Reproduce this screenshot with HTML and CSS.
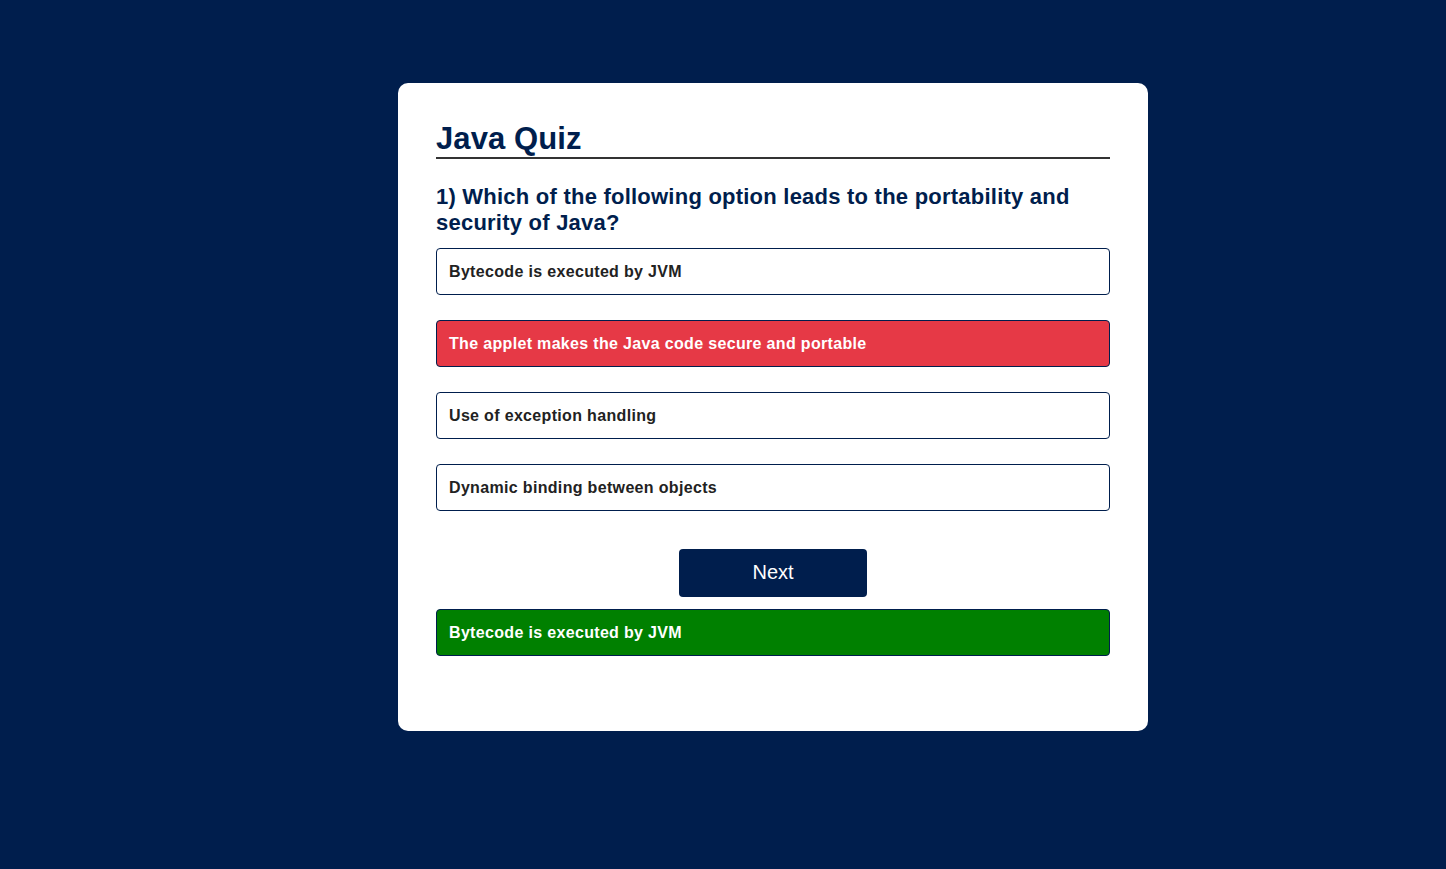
FILE: index.html
```html
<!DOCTYPE html>
<html>
<head>
<meta charset="utf-8">
<link rel="stylesheet" href="styles.css">
</head>
<body>
<main class="page">
  <section class="card">
    <h1 class="title">Java Quiz</h1>
    <h2 class="question">1) Which of the following option leads to the portability and security of Java?</h2>
    <div class="options">
      <button class="option">Bytecode is executed by JVM</button>
      <button class="option option-wrong">The applet makes the Java code secure and portable</button>
      <button class="option">Use of exception handling</button>
      <button class="option">Dynamic binding between objects</button>
    </div>
    <div class="actions">
      <button class="next">Next</button>
    </div>
    <div class="answer">Bytecode is executed by JVM</div>
  </section>
</main>
</body>
</html>
```
FILE: styles.css
```css
html, body {
  margin: 0;
  padding: 0;
  background: #001e4d;
  font-family: "Liberation Sans", Arial, sans-serif;
}
.page {
  display: flex;
  justify-content: center;
  padding: 83px 0 0 100px;
}
.card {
  width: 750px;
  box-sizing: border-box;
  background: #fff;
  border-radius: 10px;
  padding: 38px 38px 75px;
}
.title {
  margin: 0;
  font-size: 31px;
  font-weight: bold;
  color: #001e4d;
  line-height: 36px;
  letter-spacing: 0.1px;
  border-bottom: 2px solid #333;
  padding-bottom: 0;
}
.question {
  margin: 25px 0 12px;
  font-size: 22px;
  line-height: 26px;
  font-weight: bold;
  color: #001e4d;
  letter-spacing: 0.23px;
}
.options {
  display: flex;
  flex-direction: column;
  gap: 25px;
}
.option {
  display: block;
  width: 100%;
  height: 47px;
  box-sizing: border-box;
  text-align: left;
  background: #fff;
  border: 1px solid #001e4d;
  border-radius: 4px;
  padding: 0 12px;
  font-family: inherit;
  font-size: 16px;
  font-weight: bold;
  letter-spacing: 0.33px;
  color: #222;
}
.option-wrong {
  background: #e63946;
  color: #fff;
}
.actions {
  display: flex;
  justify-content: center;
  margin-top: 38px;
}
.next {
  width: 188px;
  height: 48px;
  border: none;
  border-radius: 4px;
  background: #001e4d;
  color: #fff;
  font-family: inherit;
  font-size: 20px;
  padding: 0 0 2px;
}
.answer {
  margin-top: 12px;
  height: 47px;
  box-sizing: border-box;
  display: flex;
  align-items: center;
  padding: 0 12px;
  background: #008000;
  border: 1px solid #001e4d;
  border-radius: 4px;
  color: #fff;
  font-size: 16px;
  font-weight: bold;
  letter-spacing: 0.33px;
}
```
